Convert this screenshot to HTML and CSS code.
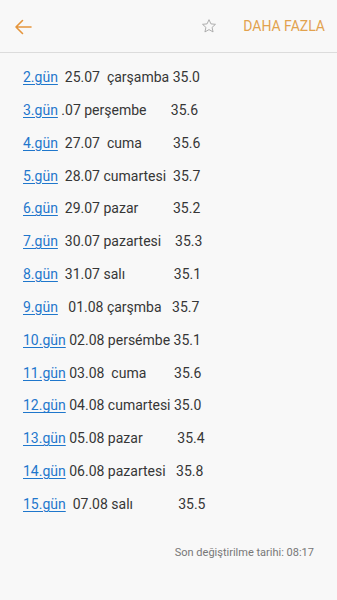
FILE: index.html
```html
<!DOCTYPE html>
<html lang="tr">
<head>
<meta charset="utf-8">
<link rel="stylesheet" href="styles.css">
</head>
<body>
<header class="bar">
  <svg class="back" width="18" height="16" viewBox="0 0 18 16"><path d="M17 8H2M8.5 1.5L2 8l6.5 6.5" fill="none" stroke="#e5953c" stroke-width="1.6" stroke-linecap="round" stroke-linejoin="round"/></svg>
  <span class="spacer"></span>
  <svg class="star" width="16" height="16" viewBox="0 0 24 24"><path d="M12 2.5l2.9 6.3 6.8.7-5.1 4.6 1.5 6.8L12 17.4l-6.1 3.5 1.5-6.8-5.1-4.6 6.8-.7z" fill="none" stroke="#a8a8a8" stroke-width="1.4" stroke-linejoin="round"/></svg>
  <span class="more">DAHA FAZLA</span>
</header>
<main class="list">
  <div class="row"><a href="#">2.gün</a>  25.07  çarşamba 35.0</div>
  <div class="row"><a href="#">3.gün</a> .07 perşembe       35.6</div>
  <div class="row"><a href="#">4.gün</a>  27.07  cuma         35.6</div>
  <div class="row"><a href="#">5.gün</a>  28.07 cumartesi  35.7</div>
  <div class="row"><a href="#">6.gün</a>  29.07 pazar          35.2</div>
  <div class="row"><a href="#">7.gün</a>  30.07 pazartesi    35.3</div>
  <div class="row"><a href="#">8.gün</a>  31.07 salı              35.1</div>
  <div class="row"><a href="#">9.gün</a>   01.08 çarşmba   35.7</div>
  <div class="row"><a href="#">10.gün</a> 02.08 persémbe 35.1</div>
  <div class="row"><a href="#">11.gün</a> 03.08  cuma        35.6</div>
  <div class="row"><a href="#">12.gün</a> 04.08 cumartesi 35.0</div>
  <div class="row"><a href="#">13.gün</a> 05.08 pazar          35.4</div>
  <div class="row"><a href="#">14.gün</a> 06.08 pazartesi   35.8</div>
  <div class="row"><a href="#">15.gün</a>  07.08 salı             35.5</div>
</main>
<footer class="foot">Son değiştirilme tarihi: 08:17</footer>
</body>
</html>
```
FILE: styles.css
```css
html, body {
  margin: 0;
  padding: 0;
  background: #f8f8f8;
  font-family: Roboto, "Liberation Sans", sans-serif;
}
.bar {
  height: 52px;
  border-bottom: 1px solid #dcdcdc;
  display: flex;
  align-items: center;
  padding: 0 12px 0 14px;
  box-sizing: content-box;
}
.back {
  display: block;
  margin-top: 1px;
}
.spacer {
  flex: 1;
}
.star {
  display: block;
  margin-right: 26px;
}
.more {
  color: #e2a24e;
  font-size: 14px;
  font-weight: 400;
}
.list {
  padding: 8px 0 0 23px;
}
.row {
  white-space: pre;
  font-size: 14px;
  line-height: 32.85px;
  color: #363636;
}
.row a {
  color: #1f77cc;
  text-decoration: underline;
  text-underline-offset: 2px;
}
.foot {
  text-align: right;
  padding: 25px 23px 0 0;
  font-size: 11px;
  color: #777;
}
```
